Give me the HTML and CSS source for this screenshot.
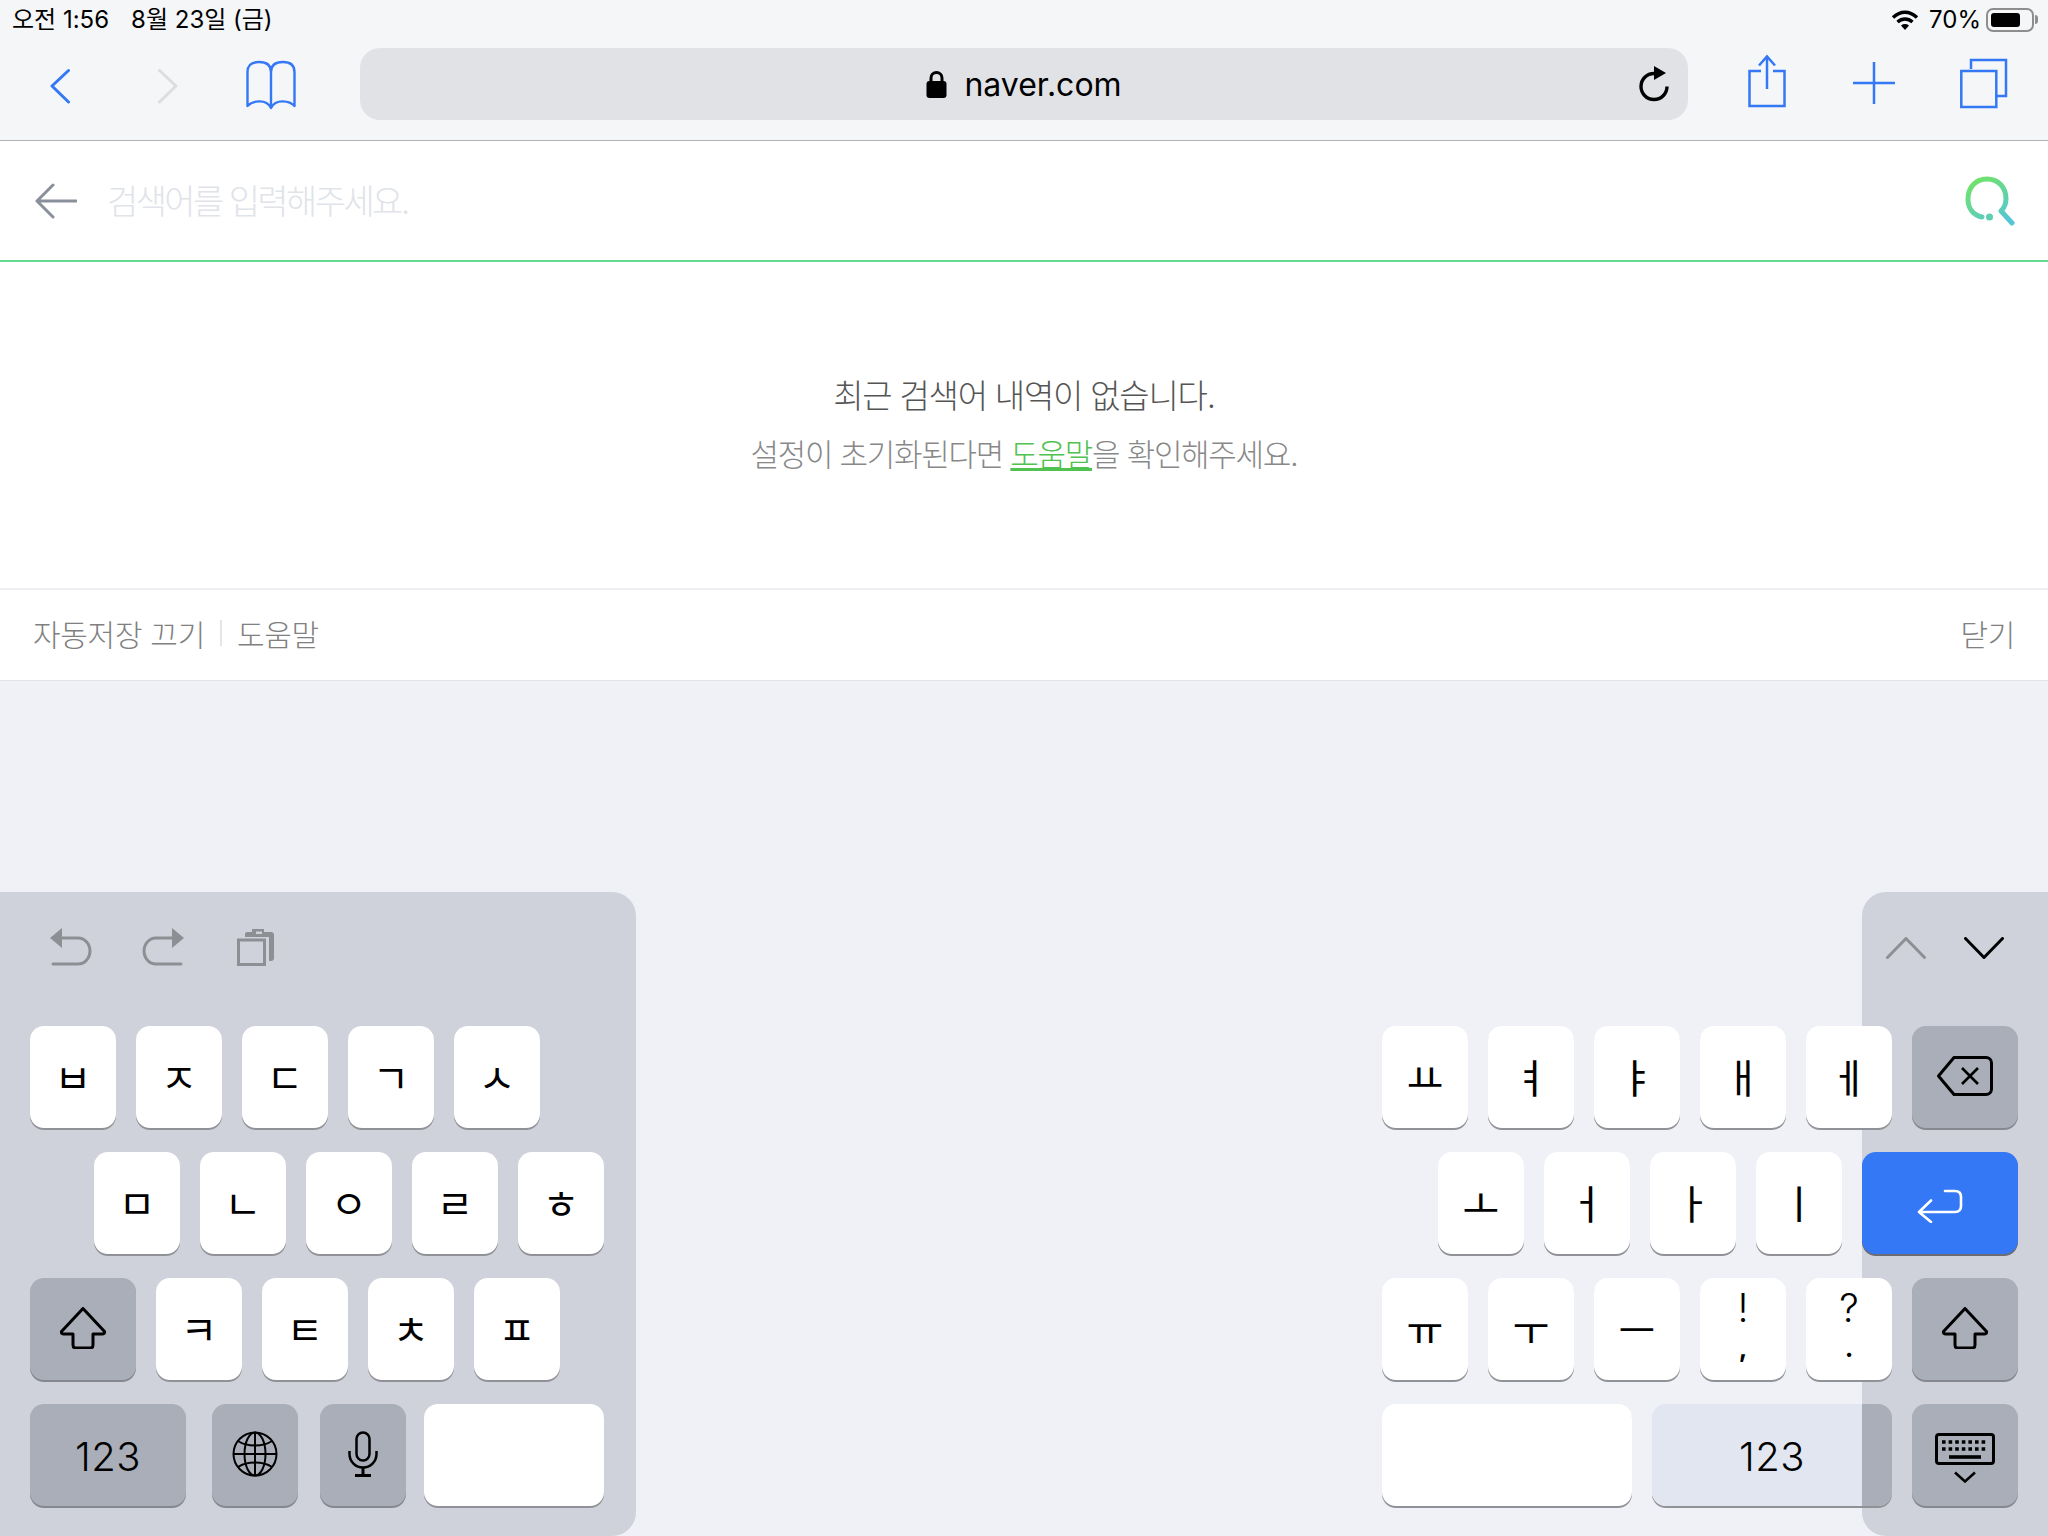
FILE: index.html
```html
<!DOCTYPE html>
<html lang="ko">
<head>
    <meta charset="UTF-8">
    <meta name="viewport" content="width=device-width, initial-scale=1.0">
    <title>naver.com</title>
    <link rel="stylesheet" href="styles.css">
</head>
<body>
<div class="page">
    <header class="browser">
        <div class="status">
            <span class="time">오전 1:56</span>
            <span class="date">8월 23일 (금)</span>
            <svg class="wifi" width="28" height="22" viewBox="0 0 28 22">
                <path d="M2 8.5C9.5 1.5 18.5 1.5 26 8.5" fill="none" stroke="#000" stroke-width="3.4"/>
                <path d="M6.5 13C11 9 17 9 21.5 13" fill="none" stroke="#000" stroke-width="3.4"/>
                <path d="M10 16.5C12.5 14.6 15.5 14.6 18 16.5L14 21Z" fill="#000"/>
            </svg>
            <span class="battery-text">70%</span>
            <div class="battery"><div class="battery-fill"></div></div>
            <div class="battery-nub"></div>
        </div>
        <div class="toolbar">
            <svg class="tb-back" width="20" height="72" viewBox="0 0 20 72"><path d="M18.5 22.5L2 38L18.5 54" fill="none" stroke="#3478f6" stroke-width="3" stroke-linecap="round" stroke-linejoin="round"/></svg>
            <svg class="tb-forward" width="20" height="72" viewBox="0 0 20 72"><path d="M1.500 22.500L18 38L1.500 54" fill="none" stroke="#dcdde0" stroke-width="3" stroke-linecap="round" stroke-linejoin="round"/></svg>
            <svg class="tb-book" width="50" height="72" viewBox="0 0 50 72">
                <g fill="none" stroke="#3478f6" stroke-width="2.400" stroke-linejoin="round">
                    <path d="M25 24C25 17 20 14 13 14C6 14 1.500 17 1.500 24V58C6 53 20 50 25 60C30 50 44 53 48.500 58V24C48.500 17 44 14 37 14C30 14 25 17 25 24V60"/>
                </g>
            </svg>
            <div class="urlbar">
                <svg class="lock" width="21" height="28" viewBox="0 0 21 28">
                    <path d="M5 12V8A5.500 5.500 0 0 1 16 8V12" fill="none" stroke="#000" stroke-width="3"/>
                    <rect x="0.500" y="11" width="20" height="17" rx="3" fill="#000"/>
                </svg>
                <span class="host">naver.com</span>
                <svg class="reload" width="30" height="36" viewBox="0 0 30 36">
                    <path d="M15 7.500A13 13 0 1 0 28 20.500" fill="none" stroke="#000" stroke-width="3.400"/>
                    <path d="M15 0V14L27 7Z" fill="#000"/>
                </svg>
            </div>
            <svg class="tb-share" width="38" height="72" viewBox="0 0 38 72">
                <g fill="none" stroke="#3478f6" stroke-width="2.500">
                    <path d="M13 23H1.500V58H36.500V23H25"/>
                    <path d="M19 41V9"/>
                    <path d="M11 17.500L19 8.500L27 17.500"/>
                </g>
            </svg>
            <svg class="tb-plus" width="42" height="72" viewBox="0 0 42 72">
                <path d="M21 14V56M0 35H42" fill="none" stroke="#3478f6" stroke-width="2.500"/>
            </svg>
            <svg class="tb-tabs" width="48" height="72" viewBox="0 0 48 72">
                <g fill="none" stroke="#3478f6" stroke-width="2.500">
                    <path d="M11 21V12H46V48H37"/>
                    <rect x="1.300" y="23" width="35" height="36"/>
                </g>
            </svg>
        </div>
    </header>

    <div class="searchbar">
        <svg class="search-back" width="42" height="36" viewBox="0 0 42 36">
            <path d="M18 2L2 18L18 34M2 18H41" fill="none" stroke="#8a8f9c" stroke-width="3" stroke-linecap="round" stroke-linejoin="round"/>
        </svg>
        <span class="placeholder">검색어를 입력해주세요.</span>
        <svg class="search-icon" width="50" height="50" viewBox="0 0 50 50">
            <defs>
                <linearGradient id="qgrad" x1="0.200" y1="0" x2="0.800" y2="1">
                    <stop offset="0" stop-color="#70e26a"/>
                    <stop offset="1" stop-color="#56c6d6"/>
                </linearGradient>
            </defs>
            <path d="M17 41C8 39 3 32 3 23C3 11 11 3 22 3C33 3 41 11 41 23C41 27 39 32 36 35L47 47" fill="none" stroke="url(#qgrad)" stroke-width="5" stroke-linecap="round" stroke-linejoin="round"/>
            <circle cx="24.500" cy="41" r="3.500" fill="#5ccfb0"/>
        </svg>
    </div>

    <div class="empty">
        <p class="empty-title">최근 검색어 내역이 없습니다.</p>
        <p class="empty-sub">설정이 초기화된다면 <a class="help-link">도움말</a>을 확인해주세요.</p>
    </div>

    <div class="options">
        <span>자동저장 끄기</span>
        <span class="divider"></span>
        <span>도움말</span>
        <span class="close">닫기</span>
    </div>

    <div class="keyboard">
        <div class="half-left">
            <div class="kb-tools">
                <svg class="tool-undo" width="42" height="38" viewBox="0 0 42 38">
                    <path d="M12 0V20L0 10Z" fill="#8e8f94"/>
                    <path d="M12 10H28A11.500 12.500 0 0 1 28 36H3" fill="none" stroke="#8e8f94" stroke-width="3" stroke-linecap="round"/>
                </svg>
                <svg class="tool-redo" width="42" height="38" viewBox="0 0 42 38">
                    <path d="M30 0V20L42 10Z" fill="#8e8f94"/>
                    <path d="M30 10H14A11.500 12.500 0 0 0 14 36H39" fill="none" stroke="#8e8f94" stroke-width="3" stroke-linecap="round"/>
                </svg>
                <svg class="tool-paste" width="37" height="38" viewBox="0 0 37 38">
                    <path d="M8 9V6A2 2 0 0 1 10 4H15V1H27V4H34A3 3 0 0 1 37 7V30A3 3 0 0 1 34 33H32V9Z" fill="#8e8f94"/>
                    <rect x="19" y="3.500" width="6" height="2.500" fill="#cfd2da"/>
                    <rect x="1.500" y="12" width="26" height="24.500" fill="#cfd2da" stroke="#8e8f94" stroke-width="3"/>
                </svg>
            </div>
            <div class="kb-row">
                <div class="key">ㅂ</div><div class="key">ㅈ</div><div class="key">ㄷ</div><div class="key">ㄱ</div><div class="key">ㅅ</div>
            </div>
            <div class="kb-row row-indent">
                <div class="key">ㅁ</div><div class="key">ㄴ</div><div class="key">ㅇ</div><div class="key">ㄹ</div><div class="key">ㅎ</div>
            </div>
            <div class="kb-row">
                <div class="key key-dark key-wide">
                    <svg width="46" height="42" viewBox="0 0 46 42"><path d="M23 1.500L44.500 24.500Q45 27 42 27H33V38Q33 41 30 41H16Q13 41 13 38V27H4Q1 27 1.500 24.500Z" fill="none" stroke="#000" stroke-width="3" stroke-linejoin="round"/></svg>
                </div>
                <div class="key">ㅋ</div><div class="key">ㅌ</div><div class="key">ㅊ</div><div class="key">ㅍ</div>
            </div>
            <div class="kb-row">
                <div class="key key-dark key-num key-123-left">123</div>
                <div class="key key-dark key-globe">
                    <svg width="46" height="46" viewBox="0 0 46 46">
                        <g fill="none" stroke="#000" stroke-width="2">
                            <circle cx="23" cy="23" r="21.500"/>
                            <ellipse cx="23" cy="23" rx="10.500" ry="21.500"/>
                            <path d="M23 1.500V44.500M1.500 23H44.500"/>
                            <path d="M6 10C15 16 31 16 40 10M6 36C15 30 31 30 40 36"/>
                        </g>
                    </svg>
                </div>
                <div class="key key-dark key-mic">
                    <svg width="30" height="46" viewBox="0 0 30 46">
                        <g fill="none" stroke="#000" stroke-width="2.500">
                            <rect x="8.500" y="1.500" width="13" height="28" rx="6.500"/>
                            <path d="M1.500 20V23A13.500 13.500 0 0 0 28.500 23V20"/>
                            <path d="M15 36.500V44M7 44.500H23" stroke-width="3"/>
                        </g>
                    </svg>
                </div>
                <div class="key key-space-left"></div>
            </div>
        </div>

        <div class="half-right">
            <div class="panel-right"></div>
            <div class="kb-tools tools-right">
                <svg class="tool-up" width="40" height="22" viewBox="0 0 40 22"><path d="M1.500 20.500L20 1.500L38.500 20.500" fill="none" stroke="#8e8f94" stroke-width="3" stroke-linecap="round" stroke-linejoin="round"/></svg>
                <svg class="tool-down" width="40" height="22" viewBox="0 0 40 22"><path d="M1.500 1.500L20 20.500L38.500 1.500" fill="none" stroke="#000" stroke-width="3" stroke-linecap="round" stroke-linejoin="round"/></svg>
            </div>
            <div class="kb-row">
                <div class="key">ㅛ</div><div class="key">ㅕ</div><div class="key">ㅑ</div><div class="key">ㅐ</div><div class="key">ㅔ</div>
                <div class="key key-dark key-wide">
                    <svg width="56" height="40" viewBox="0 0 56 40">
                        <g fill="none" stroke="#000" stroke-width="3" stroke-linejoin="round">
                            <path d="M17 1.500H49A5.500 5.500 0 0 1 54.500 7V33A5.500 5.500 0 0 1 49 38.500H17L1.500 20Z"/>
                            <path d="M25 12L41 28M41 12L25 28" stroke-width="2.600"/>
                        </g>
                    </svg>
                </div>
            </div>
            <div class="kb-row row-indent-right">
                <div class="key">ㅗ</div><div class="key">ㅓ</div><div class="key">ㅏ</div><div class="key">ㅣ</div>
                <div class="key key-return">
                    <svg width="46" height="34" viewBox="0 0 46 34">
                        <path d="M28 2H38Q44 2 44 8V17Q44 23 38 23H3M14 11.500L2 23L14 33" fill="none" stroke="#fff" stroke-width="2.600" stroke-linecap="round" stroke-linejoin="round"/>
                    </svg>
                </div>
            </div>
            <div class="kb-row">
                <div class="key">ㅠ</div><div class="key">ㅜ</div><div class="key">ㅡ</div>
                <div class="key key-punct"><span>!</span><span class="lower">,</span></div>
                <div class="key key-punct"><span>?</span><span class="lower">.</span></div>
                <div class="key key-dark key-wide">
                    <svg width="46" height="42" viewBox="0 0 46 42"><path d="M23 1.500L44.500 24.500Q45 27 42 27H33V38Q33 41 30 41H16Q13 41 13 38V27H4Q1 27 1.500 24.500Z" fill="none" stroke="#000" stroke-width="3" stroke-linejoin="round"/></svg>
                </div>
            </div>
            <div class="kb-row">
                <div class="key key-space-right"></div>
                <div class="key key-num key-123-right">123</div>
                <div class="key key-dark key-wide key-hide">
                    <svg width="60" height="50" viewBox="0 0 60 50">
                        <rect x="1.500" y="1.500" width="57" height="29" rx="2.500" fill="none" stroke="#000" stroke-width="3"/>
                        <g fill="none" stroke="#000" stroke-width="3.600">
                            <path d="M7 9H53M7 16H53" stroke-dasharray="3.600 3"/>
                            <path d="M14 24H46" stroke-width="3.600"/>
                        </g>
                        <path d="M20 39.500L30 48.500L40 39.500" fill="none" stroke="#000" stroke-width="2.500"/>
                    </svg>
                </div>
            </div>
        </div>
    </div>
</div>
</body>
</html>
```

FILE: styles.css
```css
* {
    box-sizing: border-box;
}
html, body {
    margin: 0;
    padding: 0;
}
body {
    font-family: Inter, "Noto Sans CJK KR", sans-serif;
    color: #000;
    background: #eff1f6;
}
p {
    margin: 0;
}
svg {
    display: block;
    flex: none;
}
.page {
    width: 2048px;
    height: 1536px;
    overflow: hidden;
    display: flex;
    flex-direction: column;
}

/* safari chrome */
.browser {
    height: 141px;
    background: #f5f6f8;
    border-bottom: 1px solid #b2b2b2;
}
.status {
    height: 48px;
    padding: 0 10px 0 12px;
    display: flex;
    align-items: flex-start;
    font-size: 24px;
    line-height: 40px;
    letter-spacing: 0;
}
.date {
    margin-left: 22px;
}
.wifi {
    margin: 9px 0 0 auto;
}
.battery-text {
    margin-left: 10px;
}
.battery {
    width: 48px;
    height: 24px;
    margin: 8px 0 0 5px;
    padding: 3px;
    border: 2px solid #8e8e8e;
    border-radius: 7px;
}
.battery-fill {
    width: 29px;
    height: 14px;
    background: #000;
    border-radius: 3px;
}
.battery-nub {
    width: 3px;
    height: 9px;
    margin: 15px 0 0 1px;
    background: #8e8e8e;
    border-radius: 0 3px 3px 0;
}
.toolbar {
    height: 92px;
    padding-left: 50px;
    display: flex;
    align-items: flex-start;
}
.tb-forward { margin-left: 88px; }
.tb-book { margin-left: 68px; }
.tb-share { margin-left: 60px; }
.tb-plus { margin-left: 67px; }
.tb-tabs { margin-left: 65px; }
.urlbar {
    width: 1328px;
    height: 72px;
    margin-left: 64px;
    background: #e1e2e6;
    border-radius: 20px;
    position: relative;
    display: flex;
    align-items: center;
    justify-content: center;
}
.lock {
    margin-right: 17px;
}
.host {
    font-size: 32px;
    letter-spacing: 0;
}
.reload {
    position: absolute;
    right: 19px;
    top: 18px;
}

/* search */
.searchbar {
    height: 121px;
    background: #fff;
    border-bottom: 2px solid #66d993;
    padding: 0 33px 0 35px;
    display: flex;
    align-items: center;
}
.placeholder {
    margin-left: 30px;
    padding-bottom: 2px;
    font-size: 34px;
    font-weight: 300;
    letter-spacing: -2.6px;
    color: #e0e3e8;
}
.search-icon {
    margin-left: auto;
}
.empty {
    height: 328px;
    padding-top: 105px;
    background: #fff;
    border-bottom: 2px solid #eceef2;
    text-align: center;
    line-height: 59px;
    font-weight: 300;
}
.empty-title {
    font-size: 33px;
    letter-spacing: -1.25px;
    color: #555;
}
.empty-sub {
    margin-top: -1px;
    font-size: 31px;
    letter-spacing: -1.3px;
    color: #888;
}
.help-link {
    color: #4fc24f;
    text-decoration: underline;
}
.options {
    height: 91px;
    padding: 0 33px 5px;
    background: #fff;
    border-bottom: 1px solid #e2e4e9;
    display: flex;
    align-items: center;
    font-size: 30px;
    font-weight: 300;
    letter-spacing: -0.3px;
    color: #808080;
}
.divider {
    width: 2px;
    height: 26px;
    margin: 0 15px;
    background: #e4e6ea;
}
.close {
    margin-left: auto;
}

/* keyboard */
.keyboard {
    margin-top: auto;
    height: 644px;
    display: flex;
    justify-content: space-between;
}
.half-left {
    width: 636px;
    padding-left: 30px;
    background: #cfd2da;
    border-radius: 0 24px 24px 0;
}
.half-right {
    width: 666px;
    position: relative;
}
.panel-right {
    position: absolute;
    top: 0;
    bottom: 0;
    left: 480px;
    right: 0;
    background: #cfd2da;
    border-radius: 24px 0 0 24px;
}
.kb-tools {
    height: 134px;
    display: flex;
    align-items: flex-start;
    padding-top: 36px;
    position: relative;
}
.tool-undo { margin-left: 20px; }
.tool-redo { margin-left: 50px; }
.tool-paste { margin-left: 53px; }
.tools-right {
    padding-top: 45px;
    padding-left: 504px;
}
.tool-down { margin-left: 38px; }
.kb-row {
    display: flex;
    gap: 20px;
    margin-bottom: 24px;
    position: relative;
}
.row-indent { margin-left: 64px; }
.row-indent-right { margin-left: 56px; }
.key {
    width: 86px;
    height: 102px;
    padding-bottom: 2px;
    background: #fff;
    border-radius: 14px;
    box-shadow: 0 2px 0 #919297;
    display: flex;
    align-items: center;
    justify-content: center;
    font-family: "Noto Sans CJK KR", sans-serif;
    font-size: 40px;
    line-height: 1;
}
.key-dark {
    background: #aaaeb9;
    box-shadow: 0 2px 0 #86888f;
}
.key-wide { width: 106px; }
.key-num {
    padding: 3px 0 0;
    font-family: Inter, sans-serif;
    font-size: 40px;
    font-weight: 300;
    letter-spacing: 0.5px;
}
.key-123-left {
    width: 156px;
    margin-right: 6px;
}
.key-mic { margin-left: 2px; }
.key-space-left {
    width: 180px;
    margin-left: -2px;
}
.key-space-right { width: 250px; }
.key-123-right {
    width: 240px;
    background: linear-gradient(to right, #e2e6f0 210px, #aaaeb9 210px);
}
.key-return {
    width: 156px;
    padding: 5px 0 0;
    background: #3478f6;
    box-shadow: 0 2px 0 #6a6c72;
}
.key-hide {
    align-items: flex-start;
    padding: 29px 0 0;
}
.key-punct {
    flex-direction: column;
    justify-content: flex-start;
    padding: 6px 0 0;
    font-family: Inter, sans-serif;
    font-weight: 300;
    font-size: 39px;
}
.key-punct span {
    height: 47px;
    line-height: 47px;
}
.key-punct .lower {
    height: 32px;
    margin-top: 1px;
    line-height: 32px;
    font-size: 26px;
    font-weight: 700;
}
```
